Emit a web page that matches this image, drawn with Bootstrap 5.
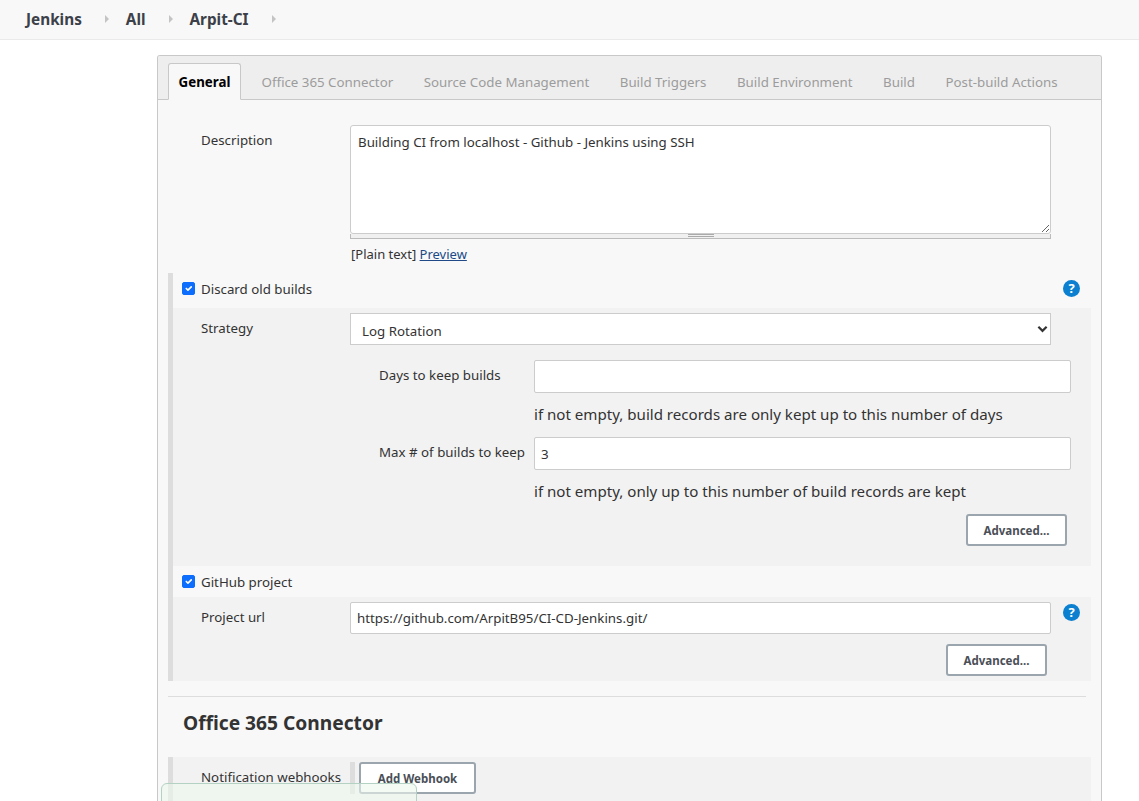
<!DOCTYPE html>
<html lang="en">
<head>
    <meta charset="UTF-8">
    <meta name="viewport" content="width=device-width, initial-scale=1.0">
    <title>Arpit-CI Config</title>
    <link href="https://cdn.jsdelivr.net/npm/bootstrap@5.3.0/dist/css/bootstrap.min.css" rel="stylesheet">
    <style>
        html, body { height: 100%; overflow: hidden; }
        body { font-family: "Noto Sans", "Open Sans", sans-serif; font-size: 13.3px; color: #333; background: #fff; }
        .crumb-bar { height: 40px; background: #f8f8f8; border-bottom: 1px solid #eaeaea; padding: 0 0 1px 26px; }
        .crumb-link { font-size: 15.3px; font-weight: 700; color: #3c4048; text-decoration: none; }
        .crumb-arrow { width: 0; height: 0; border-left: 4px solid #c4c4c4; border-top: 4px solid transparent; border-bottom: 4px solid transparent; margin: 0 17px 0 23px; }
        .config-panel { margin: 15px 37px 0 157px; border: 1px solid #c8c8c8; border-bottom: 0; border-radius: 3px 3px 0 0; background: #f8f8f8; height: 760px; overflow: hidden; }
        .tab-strip { height: 44px; padding: 7px 0 0 10px; background: #eee; border-bottom: 1px solid #c8c8c8; flex-wrap: nowrap; }
        .tab-strip .nav-link { height: 37px; padding: 0 10px 0 20.5px; line-height: 38px; font-size: 13.3px; color: #9c9c9c; border: 0; white-space: nowrap; }
        .tab-strip .nav-link.active { width: 73px; padding: 0; line-height: 36px; text-align: center; font-weight: 700; color: #000; background: #f8f8f8; border: 1px solid #c8c8c8; border-bottom-color: #f8f8f8; border-radius: 3px 3px 0 0; }
        .form-area { padding: 25px 10px 0 10px; }
        .field-name { width: 182px; padding-left: 33px; flex: none; line-height: 18px; padding-top: 6px; }
        .block-name { width: 177px; padding-left: 28px; }
        .field-main { width: 701px; flex: none; }
        .desc-box.form-control { height: 109px; font-size: 13.3px; color: #333; padding: 7px; border: 1px solid #ccc; border-radius: 3px; display: block; }
        .grip-bar { height: 5px; background: #f0f0f0; border: solid #bbb; border-width: 0 1px 1px; position: relative; }
        .grip-bar::after { content: ""; position: absolute; left: 337px; top: 0; width: 26px; height: 3px; border-top: 1px solid #aaa; border-bottom: 1px solid #aaa; }
        .preview-line { margin-top: 6px; padding-left: 1px; line-height: 18px; font-size: 13px; }
        .preview-line a { color: #204a87; }
        .opt-block { border-left: 5px solid #ddd; }
        .opt-head { height: 31px; padding-left: 9px; flex: none; }
        .opt-head label { padding-top: 2px; }
        .opt-head-tall { height: 35px; padding-bottom: 4px; margin-top: 10px; }
        .opt-head .form-check-input { width: 13px; height: 13px; margin: 0 6px 0 0; border-radius: 2px; background-color: #0d6efd; border-color: #0d6efd; }
        .opt-inner { background: #f2f2f2; }
        .strategy-inner { padding: 5px 0 20px; }
        .github-inner { padding-top: 5px; height: 84px; }
        .plain-field.form-control, .plain-select.form-select { height: 33px; font-size: 13.3px; color: #333; border: 1px solid #ccc; border-radius: 2px; padding: 0 6px; }
        .plain-select.form-select { height: 32px; padding: 6px 0 0 11px; border-radius: 0; background-image: url("data:image/svg+xml,%3csvg xmlns='http://www.w3.org/2000/svg' viewBox='0 0 12 8'%3e%3cpath fill='none' stroke='%23333' stroke-width='2.4' d='M1.5 1.5 6 6l4.5-4.5'/%3e%3c/svg%3e"); background-position: right 2px center; background-size: 11px 8px; }
        .github-field.form-control { height: 32px; }
        .sub-row { margin-top: 15px; }
        .sub-row + .sub-row { margin-top: 13px; }
        .sub-name { width: 155px; flex: none; margin-left: 206px; line-height: 18px; padding-top: 6px; white-space: nowrap; }
        .sub-main { width: 537px; flex: none; }
        .hint-text { font-size: 15.1px; color: #333; line-height: 20px; padding-top: 11px; }
        .adv-wrap { margin-top: 13px; padding-right: 4px; }
        .adv-wrap-low { margin-top: 10px; }
        .help-dot { width: 17px; height: 17px; flex: none; }
        .help-top { margin: 0 11px 0 auto; }
        .help-side { margin: 2px 0 0 12px; }
        .adv-btn.btn, .hook-btn.btn { height: 32px; font-size: 11.5px; font-weight: 700; color: #4a4f57; background: #fff; border: 2px solid #9aa5ae; border-radius: 3px; padding: 1px 0 0; }
        .adv-btn.btn { width: 101px; }
        .hook-btn.btn { width: 117px; margin-left: 4px; }
        .rule-line { height: 1px; background: #ddd; margin: 15px 5px 0 0; }
        .section-title { font-size: 19.2px; font-weight: 700; color: #333; margin: 13px 0 0 15px; line-height: 25px; height: 25px; }
        .hook-block { margin-top: 22px; }
        .hook-inner { padding-top: 5px; height: 44px; }
        .hook-handle { border-left: 5px solid #ddd; height: 32px; }
        .status-float { position: absolute; left: 161px; top: 783px; width: 256px; height: 40px; background: rgba(236, 246, 236, .6); border: 1px solid #b4d2c4; border-radius: 6px 6px 0 0; }
    </style>
</head>
<body>
    <div class="crumb-bar d-flex align-items-center">
        <a class="crumb-link" href="#">Jenkins</a><span class="crumb-arrow"></span>
        <a class="crumb-link" href="#">All</a><span class="crumb-arrow"></span>
        <a class="crumb-link" href="#">Arpit-CI</a><span class="crumb-arrow"></span>
    </div>

    <div class="config-panel">
        <ul class="nav tab-strip">
            <li class="nav-item"><a class="nav-link active" href="#">General</a></li>
            <li class="nav-item"><a class="nav-link" href="#">Office 365 Connector</a></li>
            <li class="nav-item"><a class="nav-link" href="#">Source Code Management</a></li>
            <li class="nav-item"><a class="nav-link" href="#">Build Triggers</a></li>
            <li class="nav-item"><a class="nav-link" href="#">Build Environment</a></li>
            <li class="nav-item"><a class="nav-link" href="#">Build</a></li>
            <li class="nav-item"><a class="nav-link" href="#">Post-build Actions</a></li>
        </ul>

        <div class="form-area">
            <!-- description -->
            <div class="d-flex">
                <div class="field-name">Description</div>
                <div class="field-main">
                    <textarea class="form-control desc-box">Building CI from localhost - Github - Jenkins using SSH</textarea>
                    <div class="grip-bar"></div>
                    <div class="preview-line">[Plain text] <a href="#">Preview</a></div>
                </div>
            </div>

            <!-- discard old builds -->
            <div class="opt-block">
                <div class="opt-head opt-head-tall d-flex align-items-center">
                    <input class="form-check-input" type="checkbox" checked>
                    <label>Discard old builds</label>
                    <svg class="help-dot help-top" viewBox="0 0 17 17"><circle cx="8.5" cy="8.5" r="8.5" fill="#0b7fd0"/><text x="8.5" y="13" text-anchor="middle" font-size="13" font-weight="700" font-family="Noto Sans" fill="#fff">?</text></svg>
                </div>
                <div class="opt-inner strategy-inner">
                    <div class="d-flex">
                        <div class="field-name block-name">Strategy</div>
                        <div class="field-main">
                            <select class="form-select plain-select"><option>Log Rotation</option></select>
                        </div>
                    </div>
                    <div class="d-flex sub-row">
                        <div class="sub-name">Days to keep builds</div>
                        <div class="sub-main">
                            <input class="form-control plain-field" type="text">
                            <div class="hint-text">if not empty, build records are only kept up to this number of days</div>
                        </div>
                    </div>
                    <div class="d-flex sub-row">
                        <div class="sub-name">Max # of builds to keep</div>
                        <div class="sub-main">
                            <input class="form-control plain-field" type="text" value="3">
                            <div class="hint-text">if not empty, only up to this number of build records are kept</div>
                            <div class="text-end adv-wrap"><button class="btn adv-btn" type="button">Advanced...</button></div>
                        </div>
                    </div>
                </div>
            </div>

            <!-- github project -->
            <div class="opt-block">
                <div class="opt-head d-flex align-items-center">
                    <input class="form-check-input" type="checkbox" checked>
                    <label>GitHub project</label>
                </div>
                <div class="opt-inner github-inner">
                    <div class="d-flex">
                        <div class="field-name block-name">Project url</div>
                        <div class="field-main">
                            <input class="form-control plain-field github-field" type="text" value="https://github.com/ArpitB95/CI-CD-Jenkins.git/">
                            <div class="text-end adv-wrap adv-wrap-low"><button class="btn adv-btn" type="button">Advanced...</button></div>
                        </div>
                        <svg class="help-dot help-side" viewBox="0 0 17 17"><circle cx="8.5" cy="8.5" r="8.5" fill="#0b7fd0"/><text x="8.5" y="13" text-anchor="middle" font-size="13" font-weight="700" font-family="Noto Sans" fill="#fff">?</text></svg>
                    </div>
                </div>
            </div>

            <div class="rule-line"></div>
            <div class="section-title">Office 365 Connector</div>

            <div class="opt-block hook-block">
                <div class="opt-inner hook-inner d-flex">
                    <div class="field-name block-name">Notification webhooks</div>
                    <div class="hook-handle d-flex"><button class="btn hook-btn" type="button">Add Webhook</button></div>
                </div>
            </div>
        </div>
    </div>

    <div class="status-float"></div>
</body>
</html>
